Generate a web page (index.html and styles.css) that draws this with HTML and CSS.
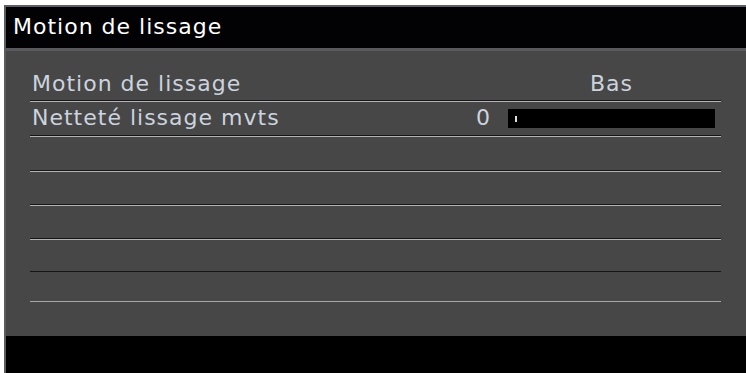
FILE: index.html
```html
<!DOCTYPE html>
<html lang="fr">

<head>
  <meta charset="UTF-8">
  <meta name="viewport" content="width=device-width, initial-scale=1.0">
  <title>Motion de lissage</title>
  <link rel="stylesheet" href="styles.css">
</head>

<body>
  <div class="osd">
    <div class="osd-title">Motion de lissage</div>
    <div class="osd-menu">
      <div class="row">
        <span class="label">Motion de lissage</span>
        <span class="value">Bas</span>
      </div>
      <div class="row">
        <span class="label">Netteté lissage mvts</span>
        <span class="num">0</span>
        <span class="slider"><span class="knob"></span></span>
      </div>
      <div class="row"></div>
      <div class="row"></div>
      <div class="row"></div>
      <div class="row dark"></div>
      <div class="row last"></div>
    </div>
    <div class="osd-footer"></div>
  </div>
</body>

</html>
```

FILE: styles.css
```css
body {
  margin: 0;
  background-color: #fff;
  font-family: "DejaVu Sans", Verdana, sans-serif;
}

.osd {
  margin: 5px 0 0 4px;
  height: 366px;
  display: flex;
  flex-direction: column;
  border-top: 2px solid #5e5e66;
  border-left: 2px solid #5c5c5c;
  background-color: #474747;
}

.osd-title {
  height: 41px;
  line-height: 40px;
  padding-left: 7px;
  font-size: 22px;
  letter-spacing: 1px;
  color: #fff;
  background-color: #020204;
  border-bottom: 3px solid #5a5a5e;
}

.osd-menu {
  flex: 1;
  padding: 16px 25px 0 24px;
}

.row {
  height: 33px;
  display: grid;
  grid-template-columns: 1fr auto 207px;
  column-gap: 18px;
  align-items: center;
  padding: 0 6px 0 2px;
  border-bottom: 1px solid #161616;
  box-shadow: 0 1px 0 #b4b4b4;
  font-size: 22px;
  line-height: 34px;
  letter-spacing: 1px;
  color: #ccd3de;
}

.row:nth-child(2),
.row:nth-child(3) {
  height: 34px;
}

.row.dark {
  height: 32px;
  box-shadow: none;
}

.row.last {
  height: 29px;
  border-bottom: none;
  box-shadow: 0 1px 0 #a8a8a8;
}

.value {
  grid-column: 3;
  text-align: center;
}

.num {
  letter-spacing: 0;
}

.slider {
  height: 19px;
  background-color: #000;
  position: relative;
}

.knob {
  position: absolute;
  left: 7px;
  top: 7px;
  width: 2px;
  height: 6px;
  background-color: #ddd;
}

.osd-footer {
  height: 37px;
  background-color: #000;
}
```
